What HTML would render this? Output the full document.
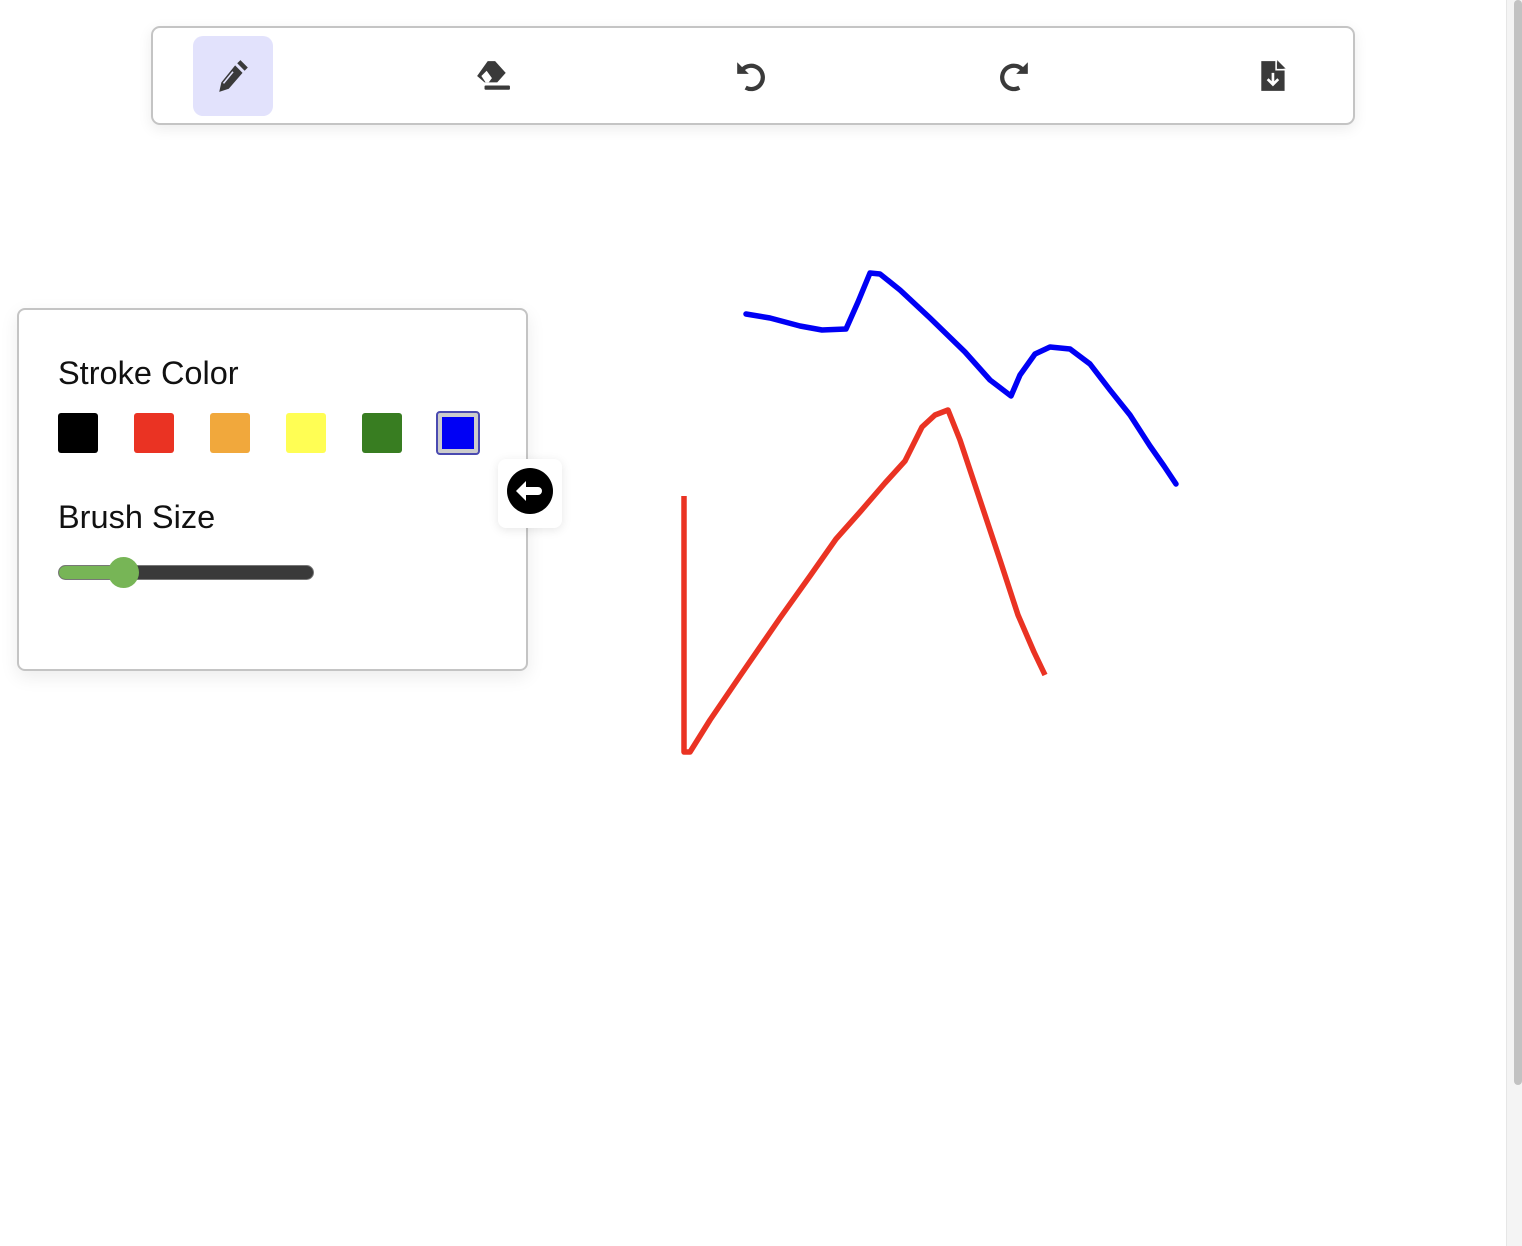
<!DOCTYPE html>
<html><head><style>
body{margin:0;width:1522px;height:1246px;background:#fff;position:relative;overflow:hidden;font-family:"Liberation Sans",sans-serif}
.tb{position:absolute;left:151px;top:26px;width:1200px;height:95px;border:2px solid #c4c4c4;border-radius:9px;box-shadow:0 4px 14px rgba(0,0,0,.08)}
.hl{position:absolute;left:193px;top:36px;width:80px;height:80px;background:#e2e2fc;border-radius:10px}
svg.i{position:absolute}
.panel{position:absolute;left:17px;top:308px;width:507px;height:359px;border:2px solid #c4c4c4;border-radius:8px;box-shadow:0 6px 18px rgba(0,0,0,.08)}
.t{position:absolute;left:58px;font-size:32.5px;color:#111}
.sw{position:absolute;top:413px;width:40px;height:40px;border-radius:3px}
.btn{position:absolute;left:498px;top:459px;width:64px;height:69px;background:#fff;border-radius:8px;box-shadow:0 2px 10px rgba(0,0,0,.1)}
</style></head><body>
<div class="tb"></div>
<div class="hl"></div>
<svg class="i" style="left:215px;top:58px" width="36" height="36" viewBox="0 0 34 34"><path d="M24 2l7 7-3 3-7-7z M19 7l7 7-13 15-9 3 2-9z" fill="#3a3a3a"/><path d="M8 24l9-11" stroke="#e2e2fc" stroke-width="1.5"/></svg>
<svg class="i" style="left:475px;top:59px" width="36" height="34" viewBox="0 0 34 32"><path d="M12 2h7l10 11-8 9H9L2 16z" fill="#3a3a3a"/><path d="M6 16l5-5 5 7-3 4H10z" fill="#fff"/><rect x="9" y="25" width="24" height="4" rx="1" fill="#3a3a3a"/></svg>
<svg class="i" style="left:734px;top:59px" width="36" height="34" viewBox="0 0 34 32"><path d="M8 10A11 11 0 1 1 11 27" fill="none" stroke="#3a3a3a" stroke-width="4"/><path d="M3 3v11h11z" fill="#3a3a3a"/></svg>
<svg class="i" style="left:995px;top:59px" width="36" height="34" viewBox="0 0 34 32"><path d="M26 10A11 11 0 1 0 23 27" fill="none" stroke="#3a3a3a" stroke-width="4"/><path d="M31 3v11H20z" fill="#3a3a3a"/></svg>
<svg class="i" style="left:1259px;top:58px" width="30" height="36" viewBox="0 0 28 34"><path d="M2 3h14l8 8v20H2z" fill="#3a3a3a"/><path d="M17 2v8h8z" fill="#3a3a3a"/><path d="M16 2l0 9h9" fill="none" stroke="#fff" stroke-width="1.5"/><path d="M13 14v11M8 20l5 5 5-5" fill="none" stroke="#fff" stroke-width="2.5"/></svg>
<div style="position:absolute;left:1506px;top:0;width:16px;height:1246px;background:#f4f4f4;border-left:1px solid #e6e6e6"></div>
<div style="position:absolute;left:1514px;top:0;width:8px;height:1085px;background:#c2c2c2;border-radius:4px"></div>
<div class="panel"></div>
<div class="t" style="top:355px">Stroke Color</div>
<div class="sw" style="left:58px;background:#000"></div>
<div class="sw" style="left:134px;background:#ea3323"></div>
<div class="sw" style="left:210px;background:#f1a83c"></div>
<div class="sw" style="left:286px;background:#fffe54"></div>
<div class="sw" style="left:362px;background:#387d21"></div>
<div style="position:absolute;left:436px;top:411px;width:40px;height:40px;border:2px solid #4a4ab0;border-radius:4px;background:#ccc"></div>
<div style="position:absolute;left:442px;top:417px;width:32px;height:32px;background:#0000f5"></div>
<div class="t" style="top:499px">Brush Size</div>
<div style="position:absolute;left:58px;top:565px;width:254px;height:13px;border:1px solid #777;background:#3a3a3a;border-radius:8px"></div>
<div style="position:absolute;left:59px;top:566px;width:66px;height:13px;background:#77b556;border-radius:8px 0 0 8px"></div>
<div style="position:absolute;left:108px;top:557px;width:31px;height:31px;background:#77b556;border-radius:50%"></div>
<div class="btn"></div>
<svg class="i" style="left:506px;top:467px" width="48" height="48" viewBox="0 0 48 48"><circle cx="24" cy="24" r="23" fill="#000"/><path d="M10 24l10-10v6h12a4 4 0 0 1 0 8H20v6z" fill="#fff"/></svg>
<svg class="i" style="left:0;top:0" width="1500" height="1246"><polyline fill="none" stroke="#0000f5" stroke-width="5.5" stroke-linejoin="round" stroke-linecap="round" points="746,314 770,318 800,326 822,330 846,329 858,302 870,273 880,274 900,290 930,318 965,352 990,380 1011,396 1020,375 1035,354 1050,347 1070,349 1090,364 1110,390 1130,415 1150,446 1164,466 1176,484"/><polyline fill="none" stroke="#ea3323" stroke-width="5.5" stroke-linejoin="round" points="684,496 684,752 690,752 710,720 740,676 780,618 810,576 836,539 860,512 885,483 905,461 922,427 935,415 948,410 960,440 980,500 1000,560 1018,615 1034,652 1045,675"/></svg>
</body></html>
